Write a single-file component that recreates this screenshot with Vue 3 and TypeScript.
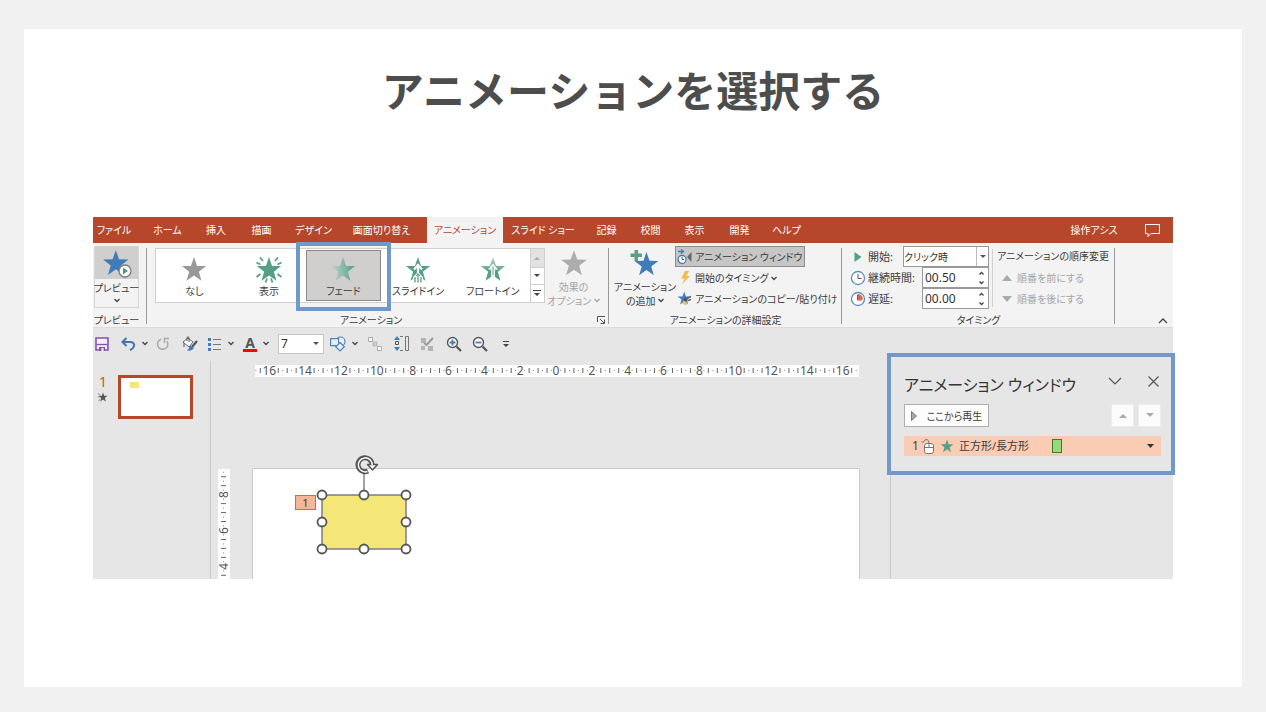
<script setup lang="ts">
import { ref } from 'vue'

interface Tab { label: string; active?: boolean }
interface Mark { at: number; kind: 'number' | 'tick' | 'dot'; value: number }

const STAR = 'M12 1 14.8 9 23 9.2 16.4 14.3 18.8 22.5 12 17.7 5.2 22.5 7.6 14.3 1 9.2 9.2 9Z'

const tabs: Tab[] = [
  { label: 'ファイル' },
  { label: 'ホーム' },
  { label: '挿入' },
  { label: '描画' },
  { label: 'デザイン' },
  { label: '画面切り替え' },
  { label: 'アニメーション', active: true },
  { label: 'スライド ショー' },
  { label: '記録' },
  { label: '校閲' },
  { label: '表示' },
  { label: '開発' },
  { label: 'ヘルプ' },
]

const effects = [
  { id: 'none', label: 'なし' },
  { id: 'appear', label: '表示' },
  { id: 'fade', label: 'フェード' },
  { id: 'slide', label: 'スライドイン' },
  { id: 'float', label: 'フロートイン' },
]
const selected = ref('fade')
const fontSize = ref('7')
const start = ref('クリック時')
const duration = ref('00.50')
const delay = ref('00.00')

const STEP = 4.48
function marks(from: number, to: number, origin: number, direction: number): Mark[] {
  const list: Mark[] = []
  for (let k = from; k <= to; k++) {
    const value = Math.abs(k / 4)
    const wide = [1, -1].some((d) => (k + d) % 8 === 0 && Math.abs((k + d) / 4) >= 10)
    if (wide) continue
    list.push({
      at: origin + direction * k * STEP,
      kind: k % 8 === 0 ? 'number' : k % 2 === 0 ? 'tick' : 'dot',
      value,
    })
  }
  return list
}
const horizontal = marks(-67, 67, 301, 1)
const vertical = marks(14, 37, 169, -1)

const handles = [
  [28, 27], [70, 27], [112, 27],
  [28, 54], [112, 54],
  [28, 81], [70, 81], [112, 81],
]
</script>

<template>
  <main class="page">
    <section class="card">
      <h1>アニメーションを選択する</h1>

      <div class="office">
        <nav class="tabs" aria-label="リボン">
          <button v-for="t in tabs" :key="t.label" type="button" :class="{ active: t.active }">{{ t.label }}</button>
          <span class="grow"></span>
          <button type="button" class="assist">操作アシス</button>
          <button type="button" aria-label="コメント">
            <svg width="17" height="15" viewBox="0 0 17 15" fill="none" stroke="#fff"><path d="M1.5 1.5h14v9H7l-3 3v-3H1.5z" /></svg>
          </button>
        </nav>

        <div class="ribbon">
          <section class="group preview">
            <div class="body">
              <button type="button" class="preview-button">
                <span class="preview-top">
                  <svg width="32" height="32" viewBox="0 0 32 32">
                    <path :d="STAR" fill="#3f7cb8" transform="translate(1 2) scale(1.15)" />
                    <circle cx="24" cy="24" r="6" fill="#fff" stroke="#7c7c7c" stroke-width="1.3" />
                    <path d="M22 20.5v7l5-3.500z" fill="#4a9c80" />
                  </svg>
                </span>
                <span>プレビュー</span>
                <svg width="6" height="5" viewBox="0 0 6 5" class="chev"><path d="M.5 1 3 3.500 5.500 1" /></svg>
              </button>
            </div>
            <footer>プレビュー</footer>
          </section>

          <section class="group animation">
            <div class="body">
              <div class="gallery">
                <button
                  v-for="e in effects"
                  :key="e.id"
                  type="button"
                  class="effect"
                  :class="{ selected: selected === e.id }"
                  @click="selected = e.id"
                >
                  <svg width="30" height="30" viewBox="0 0 30 30">
                    <defs>
                      <linearGradient id="fade"><stop offset=".1" stop-color="#b9cfc6" /><stop offset="1" stop-color="#4f9f88" /></linearGradient>
                      <linearGradient id="rise" x2="0" y2="1"><stop offset="0" stop-color="#b5d6cb" /><stop offset=".6" stop-color="#549f88" /></linearGradient>
                    </defs>
                    <path
                      :d="STAR"
                      transform="translate(1.800 2) scale(1.1)"
                      :fill="e.id === 'none' ? '#999' : e.id === 'fade' ? 'url(#fade)' : e.id === 'float' ? 'url(#rise)' : '#559f87'"
                    />
                    <path v-if="e.id === 'appear'" d="M6 3.500 9 7M24 3.500 21 7M2.500 8.500l4 2M27.500 8.500l-4 2M2.500 23l4-3M27.500 23l-4-3M11.500 28.500l1.500-4M18.500 28.500l-1.500-4" stroke="#559f87" stroke-width="1.800" />
                    <g v-if="e.id === 'slide'">
                      <path d="M15 11v11M11 15.500l4-4.500 4 4.500" fill="none" stroke="#fff" stroke-width="2.200" />
                      <path d="M10 28v-5l5-5 5 5v5z" fill="#fff" />
                      <path d="M15 20v8.500M12 23v5.500M18 23v5.500" stroke="#559f87" stroke-width="1.300" />
                      <path d="M13 22l2-2.500 2 2.500" fill="none" stroke="#559f87" />
                    </g>
                    <path v-if="e.id === 'float'" d="M15 9.500l5 6h-3v7h-4v-7h-3z" fill="#fff" />
                    <path v-if="e.id === 'float'" d="M15 12.500v9" stroke="#549f88" />
                  </svg>
                  <span>{{ e.label }}</span>
                </button>
                <div class="scroller">
                  <button type="button" class="dim" aria-label="上へ"><svg width="6" height="4" viewBox="0 0 6 4"><path d="M0 4 3 1l3 3z" fill="#aaa" /></svg></button>
                  <button type="button" aria-label="下へ"><svg width="6" height="4" viewBox="0 0 6 4"><path d="M0 0h6L3 3z" fill="#444" /></svg></button>
                  <button type="button" aria-label="その他"><svg width="8" height="7" viewBox="0 0 8 7"><path d="M0 0h8v1H0zM1 3h6L4 6z" fill="#444" /></svg></button>
                </div>
              </div>
              <button type="button" class="tall disabled" disabled>
                <svg width="28" height="28" viewBox="0 0 24 24"><path :d="STAR" fill="#adadad" /></svg>
                <span>効果の</span>
                <span>オプション <svg width="6" height="5" viewBox="0 0 6 5" class="chev"><path d="M.5 1 3 3.500 5.500 1" /></svg></span>
              </button>
            </div>
            <footer>
              <span class="grow">アニメーション</span>
              <button type="button" aria-label="詳細"><svg width="9" height="8" viewBox="0 0 9 8" fill="none" stroke="#555"><path d="M.5 6V.5H8M3 3l4 4M7.500 3.500v4h-4" /></svg></button>
            </footer>
          </section>

          <section class="group detail">
            <div class="body">
              <button type="button" class="tall">
                <svg width="32" height="28" viewBox="0 0 32 28">
                  <path :d="STAR" fill="#3f7cb8" transform="translate(4.500 2) scale(1.080)" />
                  <path d="M5.500 1h3.500v3.500h4V8H9v4H5.500V8h-4V4.500h4z" fill="#5b9f8a" />
                </svg>
                <span>アニメーション</span>
                <span>の追加 <svg width="6" height="5" viewBox="0 0 6 5" class="chev"><path d="M.5 1 3 3.500 5.500 1" /></svg></span>
              </button>
              <div class="rows">
                <button type="button" class="pressed">
                  <svg width="16" height="16" viewBox="0 0 16 16">
                    <path d="M1 2.500h5M4 .5l2.500 2L4 4.500" fill="none" stroke="#3f7cb8" stroke-width="1.300" />
                    <circle cx="5" cy="10.500" r="4" fill="#fff" stroke="#3f7cb8" stroke-width="1.300" />
                    <path d="M5 8v2.500h2" fill="none" stroke="#555" />
                    <path d="M14.500 3v10L10 8z" fill="#666" />
                  </svg>
                  <span>アニメーション ウィンドウ</span>
                </button>
                <button type="button">
                  <svg width="16" height="16" viewBox="0 0 16 16"><path d="M8 1h4L9.500 6H13L5 14.500 7.500 8.500H4z" fill="#f0bd55" /></svg>
                  <span>開始のタイミング <svg width="6" height="5" viewBox="0 0 6 5" class="chev"><path d="M.5 1 3 3.500 5.500 1" /></svg></span>
                </button>
                <button type="button">
                  <svg width="16" height="16" viewBox="0 0 16 16">
                    <path :d="STAR" fill="#3f7cb8" transform="translate(0 0) scale(.6)" />
                    <path d="M6 8.500l3-2 2 2.500-2.500 2z" fill="#555" /><path d="M6.500 9.500l4.500 2.500-2.500 2.500-3-2z" fill="#f0c070" /><path d="M10 7.500l4-2M11 9.500l3-1" stroke="#666" stroke-width="1.500" />
                  </svg>
                  <span>アニメーションのコピー/貼り付け</span>
                </button>
              </div>
            </div>
            <footer>アニメーションの詳細設定</footer>
          </section>

          <section class="group timing">
            <div class="body">
              <div class="fields">
                <div class="field">
                  <svg width="16" height="16" viewBox="0 0 16 16"><path d="M4.500 3v10l7-5z" fill="#559f87" /></svg>
                  <label for="start">開始:</label>
                  <span class="combo start">
                    <select id="start" v-model="start"><option>クリック時</option><option>直前の動作と同時</option></select>
                    <i><svg width="6" height="4" viewBox="0 0 6 4"><path d="M0 0h6L3 3z" fill="#555" /></svg></i>
                  </span>
                </div>
                <div class="field">
                  <svg width="16" height="16" viewBox="0 0 16 16"><circle cx="8" cy="8" r="6.500" fill="#fff" stroke="#5e8fc0" stroke-width="1.300" /><path d="M8 4v4.500h3.500" fill="none" stroke="#555" /></svg>
                  <label for="duration">継続時間:</label>
                  <span class="combo spin">
                    <input id="duration" v-model="duration" type="text" />
                    <i><svg width="7" height="14" viewBox="0 0 7 14" class="chev"><path d="M1.500 3.500l2-2 2 2M1.500 10.500l2 2 2-2" /></svg></i>
                  </span>
                </div>
                <div class="field">
                  <svg width="16" height="16" viewBox="0 0 16 16"><circle cx="8" cy="8" r="6.500" fill="#fff" stroke="#5e8fc0" stroke-width="1.300" /><path d="M8 8.500V3a5.500 5.500 0 0 1 5 5.500z" fill="#e5604a" /><path d="M7.500 3.500V9H12" fill="none" stroke="#a44" /></svg>
                  <label for="delay">遅延:</label>
                  <span class="combo spin">
                    <input id="delay" v-model="delay" type="text" />
                    <i><svg width="7" height="14" viewBox="0 0 7 14" class="chev"><path d="M1.500 3.500l2-2 2 2M1.500 10.500l2 2 2-2" /></svg></i>
                  </span>
                </div>
              </div>
              <div class="order">
                <span>アニメーションの順序変更</span>
                <button type="button" disabled><svg width="10" height="6" viewBox="0 0 10 6"><path d="M0 6 5 0l5 6z" fill="#aaa" /></svg>順番を前にする</button>
                <button type="button" disabled><svg width="10" height="6" viewBox="0 0 10 6"><path d="M0 0h10L5 6z" fill="#aaa" /></svg>順番を後にする</button>
              </div>
            </div>
            <footer>タイミング</footer>
          </section>

          <button type="button" class="collapse" aria-label="リボンを折りたたむ">
            <svg width="10" height="6" viewBox="0 0 10 6" fill="none" stroke="#444" stroke-width="1.300"><path d="M1 5l4-4 4 4" /></svg>
          </button>
          <div class="frame frame-fade"></div>
        </div>

        <div class="quick">
          <button type="button" class="w26" aria-label="保存"><svg width="14" height="14" viewBox="0 0 14 14"><path d="M1 1h12v12H1z" fill="#f3eef7" stroke="#8454a8" stroke-width="1.600" /><path d="M1.500 7.500h11" stroke="#8454a8" stroke-width="1.300" /><path d="M4 10h6v4H4z" fill="#8454a8" /><path d="M6.500 11h2v3h-2z" fill="#fff" /></svg></button>
          <button type="button" class="w36" aria-label="元に戻す">
            <svg width="15" height="14" viewBox="0 0 15 14" fill="none" stroke="#3f76b5" stroke-width="2"><path d="M5.500 1 1.500 5l4 4M2 5h7c6 0 5 6 0 8" /></svg>
            <svg width="6" height="5" viewBox="0 0 6 5" class="chev"><path d="M.5 1 3 3.500 5.500 1" /></svg>
          </button>
          <button type="button" class="w26" aria-label="繰り返し"><svg width="14" height="14" viewBox="0 0 14 14" fill="none" stroke="#aaa" stroke-width="1.500"><path d="M5 2.200a5.200 5.200 0 1 0 6 2M8.500 6V1.500H13" /></svg></button>
          <button type="button" class="w26" aria-label="塗りつぶし"><svg width="16" height="16" viewBox="0 0 16 16"><path d="M1 6l5-4 5 4-4 5z" fill="#fff" stroke="#666" /><path d="M5 5V1.500q1-1.500 2 0V6M2 7v4" stroke="#555" fill="none" /><path d="M15 5 10 11" stroke="#555" stroke-width="2.200" /><path d="M8 9l4 3q-2 3.500-7 2.500 2-1 3-5.500z" fill="#3f7cb8" /></svg></button>
          <button type="button" class="w36" aria-label="箇条書き">
            <svg width="14" height="14" viewBox="0 0 14 14"><path d="M0 1h3v3H0zM0 6h3v3H0zM0 11h3v3H0z" fill="#3f7cb8" /><path d="M5 2.500h8M5 7.500h8M5 12.500h8" stroke="#777" /></svg>
            <svg width="6" height="5" viewBox="0 0 6 5" class="chev"><path d="M.5 1 3 3.500 5.500 1" /></svg>
          </button>
          <button type="button" class="w36" aria-label="フォントの色">
            <span class="font-color">A</span>
            <svg width="6" height="5" viewBox="0 0 6 5" class="chev"><path d="M.5 1 3 3.500 5.500 1" /></svg>
          </button>
          <span class="combo size">
            <select v-model="fontSize" aria-label="フォント サイズ"><option>7</option><option>8</option></select>
            <i><svg width="6" height="4" viewBox="0 0 6 4"><path d="M0 0h6L3 3z" fill="#555" /></svg></i>
          </span>
          <button type="button" class="w38" aria-label="図形">
            <svg width="16" height="16" viewBox="0 0 16 16" stroke="#4f83b9" stroke-width="1.200" fill="#e6eff7"><circle cx="10.500" cy="5.500" r="4.500" /><path d="M.6 2.600h8v7h-8z" /><path d="M10 6.500l4.300 4.300L10 15l-4.300-4.200z" /></svg>
            <svg width="6" height="5" viewBox="0 0 6 5" class="chev"><path d="M.5 1 3 3.500 5.500 1" /></svg>
          </button>
          <button type="button" class="w26" aria-label="グループ化"><svg width="14" height="14" viewBox="0 0 14 14" fill="#fff" stroke="#aaa"><path d="M.5.5h4v4h-4zM9.500 9.500h4v4h-4z" /><path d="M5 5h4v4H5z" fill="#ccc" stroke="#bbb" /></svg></button>
          <button type="button" class="w26" aria-label="高さ"><svg width="16" height="15" viewBox="0 0 16 15" fill="none" stroke="#777"><path d="M11.500.5h3v14h-3zM6 .5h3M6 14.500h3" /><path d="M1.500 5.500h3v3h-3z" stroke="#555" /><path d="M3 0l3 4H0zM3 15l3-4H0z" fill="#3f7cb8" stroke="none" /></svg></button>
          <button type="button" class="w26" aria-label="書式"><svg width="14" height="14" viewBox="0 0 14 14"><path d="M1 1h5v5H1zM8 9h5v5H8zM1 9h4v4H1z" fill="#b4b4b4" /><path d="M13 1 6.500 8 4 6" stroke="#999" stroke-width="2" fill="none" /></svg></button>
          <button type="button" class="w26" aria-label="拡大"><svg width="16" height="16" viewBox="0 0 16 16" fill="none" stroke="#555"><circle cx="6.500" cy="6.500" r="5" fill="#fff" stroke-width="1.400" /><path d="M10.500 10.500 15 15" stroke-width="2.200" /><path d="M3.500 6.500h6M6.500 3.500v6" stroke="#3f7cb8" stroke-width="1.800" /></svg></button>
          <button type="button" class="w32" aria-label="縮小"><svg width="16" height="16" viewBox="0 0 16 16" fill="none" stroke="#555"><circle cx="6.500" cy="6.500" r="5" fill="#fff" stroke-width="1.400" /><path d="M10.500 10.500 15 15" stroke-width="2.200" /><path d="M3.500 6.500h6" stroke="#3f7cb8" stroke-width="1.800" /></svg></button>
          <button type="button" aria-label="カスタマイズ"><svg width="6" height="6" viewBox="0 0 6 6"><path d="M0 0h6v1H0zM0 3h6L3 6z" fill="#444" /></svg></button>
        </div>

        <div class="workspace">
          <aside class="slides">
            <div class="slide-meta">
              <b>1</b>
              <svg width="10" height="10" viewBox="0 0 24 24"><path :d="STAR" fill="#555" /><path d="M0 4l5 2M0 12h4M1 21l4-3" stroke="#777" stroke-width="2" /></svg>
            </div>
            <button type="button" class="thumb" aria-label="スライド 1"><i></i></button>
          </aside>

          <div class="editor">
            <svg class="ruler-h" width="604" height="12" viewBox="0 0 604 12">
              <template v-for="m in horizontal" :key="m.at">
                <text v-if="m.kind === 'number'" :x="m.at" y="10" text-anchor="middle">{{ m.value }}</text>
                <rect v-else-if="m.kind === 'tick'" :x="m.at - 0.5" y="3" width="1" height="5" fill="#666" />
                <rect v-else :x="m.at - 0.5" y="5" width="1" height="1" fill="#888" />
              </template>
            </svg>
            <svg class="ruler-v" width="12" height="110" viewBox="0 0 12 110">
              <template v-for="m in vertical" :key="m.at">
                <text v-if="m.kind === 'number'" :transform="`translate(10 ${m.at}) rotate(-90)`" text-anchor="middle">{{ m.value }}</text>
                <rect v-else-if="m.kind === 'tick'" x="3" :y="m.at - 0.5" width="5" height="1" fill="#666" />
                <rect v-else x="5" :y="m.at - 0.5" width="1" height="1" fill="#888" />
              </template>
            </svg>
            <div class="slide">
              <span class="tag">1</span>
              <svg class="shape" width="120" height="104" viewBox="0 0 120 104">
                <g transform="translate(0 14)">
                  <path d="M70 27V6" stroke="#666" stroke-width="1.200" />
                  <rect x="28" y="27" width="84" height="54" fill="#f4e677" stroke="#7c7c8c" stroke-width="1.500" />
                  <g fill="#fff" stroke="#555" stroke-width="1.800">
                    <circle v-for="(h, i) in handles" :key="i" :cx="h[0]" :cy="h[1]" r="4.500" />
                  </g>
                  <g fill="none" stroke-linejoin="round">
                    <path d="M78-3A7 7 0 1 0 74 3" stroke="#555" stroke-width="5" />
                    <path d="M73.500-3.500h10l-5 5.500z" fill="#fff" stroke="#555" stroke-width="1.500" />
                    <path d="M78.300-3A7 7 0 1 0 73.500 3.500" stroke="#fff" stroke-width="1.500" />
                  </g>
                </g>
              </svg>
            </div>
          </div>

          <aside class="pane">
            <header>
              <h2>アニメーション ウィンドウ</h2>
              <button type="button" aria-label="オプション"><svg width="14" height="8" viewBox="0 0 14 8" fill="none" stroke="#555" stroke-width="1.200"><path d="M1 1l6 6 6-6" /></svg></button>
              <button type="button" aria-label="閉じる"><svg width="11" height="11" viewBox="0 0 11 11" fill="none" stroke="#555" stroke-width="1.200"><path d="M.5.5l10 10M10.500.5l-10 10" /></svg></button>
            </header>
            <div class="controls">
              <button type="button" class="play"><svg width="6" height="10" viewBox="0 0 6 10"><path d="M.5.5v9l5-4.500z" fill="#aaa" stroke="#777" /></svg>ここから再生</button>
              <button type="button" class="step" disabled aria-label="前へ"><svg width="8" height="5" viewBox="0 0 8 5"><path d="M0 5l4-4 4 4z" fill="#aaa" /></svg></button>
              <button type="button" class="step" disabled aria-label="後へ"><svg width="8" height="5" viewBox="0 0 8 5"><path d="M0 0h8L4 4z" fill="#aaa" /></svg></button>
            </div>
            <button type="button" class="item">
              <span class="order-number">1</span>
              <svg width="14" height="16" viewBox="0 0 14 16" fill="none" stroke="#777"><path d="M.5 3.500Q2 5 3 3.500 4 1 6 1.500q2 .5 2 4" /><rect x="3.500" y="5.500" width="9" height="10" rx="2.500" fill="#fff" /><path d="M3.500 9.500h9M8 5.500v4" /></svg>
              <svg width="14" height="14" viewBox="0 0 24 24"><path :d="STAR" fill="#559f87" /></svg>
              <span class="name">正方形/長方形</span>
              <i></i>
              <svg width="7" height="4" viewBox="0 0 7 4" class="end"><path d="M0 0h7L3.500 4z" fill="#333" /></svg>
            </button>
          </aside>
          <div class="frame frame-pane"></div>
        </div>
      </div>
    </section>
  </main>
</template>

<style>
body { margin: 0; }
</style>

<style scoped>
.page {
  box-sizing: border-box;
  min-height: 100vh;
  padding: 29px 24px 25px;
  display: flex;
  background: #f1f1f1;
  color: #3c3c3c;
  font-family: "Noto Sans", "Noto Sans CJK JP", sans-serif;
  font-size: 11px;
  line-height: 14px;
  font-feature-settings: "palt";
}
.page * { box-sizing: border-box; }
.card { flex: 1; min-width: 0; background: #fff; padding: 29px 69px; }
h1 {
  margin: 0 0 97px;
  text-align: center;
  color: #4d4d4d;
  font: 700 42px/62px "Noto Sans CJK JP", sans-serif;
  font-feature-settings: normal;
}
button, select, input {
  font: inherit;
  font-feature-settings: inherit;
  color: inherit;
  margin: 0;
  padding: 0;
  border: 0;
  background: none;
  border-radius: 0;
  outline: 0;
}
button { display: flex; align-items: center; justify-content: center; white-space: nowrap; }
svg { flex: none; display: block; }
.chev { display: inline-block; fill: none; stroke: #444; stroke-width: 1.3; vertical-align: middle; }
.grow { flex: 1; }
.office { background: #e6e6e6; position: relative; }

.tabs {
  display: grid;
  grid-template-columns: 42px 65px 32px 59px 45px 91px 76px 80px 47px 41px 47px 43px 51px 1fr 52px 53px;
  height: 26px;
  background: #b7472a;
  color: #fff;
  font-size: 10px;
}
.tabs button.active { background: #f3f3f3; color: #b7472a; }
.tabs button:last-child { padding-right: 14px; justify-content: flex-end; }
.tabs button:last-child svg { margin-right: -2px; }

.ribbon { display: flex; height: 85px; background: #f3f3f3; border-bottom: 1px solid #dcdcdc; position: relative; padding: 3px 0 0; font-size: 10px; }
.group { display: flex; flex-direction: column; position: relative; }
.group::after { content: ""; position: absolute; right: 0; top: 2px; bottom: 3px; width: 1px; background: #999; }
.body { flex: 1; display: flex; align-items: flex-start; }
footer { height: 14px; display: flex; justify-content: center; text-align: center; }
.preview { width: 54px; }
.preview footer { padding-right: 7px; }
.preview-button { flex-direction: column; width: 45px; height: 62px; margin-left: 1px; border: 1px solid #d5d5d5; justify-content: flex-start; }
.preview-top { width: 100%; height: 32px; margin-bottom: 2px; background: #cfcfcf; display: flex; justify-content: center; }
.preview-button .chev { margin-top: 3px; }
.animation { width: 462px; }
.animation footer { padding-right: 2px; }
.gallery { display: flex; width: 390px; height: 55px; margin: 2px 0 0 8px; border: 1px solid #cfcfcf; background: #fff; }
.effect { flex: 1; flex-direction: column; justify-content: flex-start; border: 1px solid transparent; height: 51px; margin-top: 1px; }
.effect:first-child { margin-left: 1px; }
.effect svg { margin-top: 3px; }
.effect.selected { background: #d0cfcd; border-color: #8a8a8a; }
.scroller { width: 14px; display: grid; grid-template-rows: 18px 17px 18px; border-left: 1px solid #cfcfcf; }
.scroller button + button { border-top: 1px solid #cfcfcf; }
.scroller .dim { background: #e2e2e2; }
.tall { flex-direction: column; width: 57px; height: 62px; padding-top: 3px; justify-content: flex-start; }
.tall svg:first-child { margin-bottom: 3px; }
.disabled, .order button { color: #a6a6a6; }
.disabled .chev { stroke: #a6a6a6; }
.animation footer button { width: 12px; }
.detail { width: 233px; }
.detail .tall { width: 60px; margin-left: 6px; }
.rows { display: grid; grid-template-rows: 21px 21px 21px; justify-items: start; }
.rows button { padding-left: 2px; gap: 2px; height: 21px; }
.rows .pressed { background: #c6c6c6; border: 1px solid #8c8c8c; padding: 0 2px 0 1px; }
.timing { width: 273px; }
.fields { width: 147px; padding-left: 8px; display: grid; grid-template-rows: 21px 21px 21px; }
.field { display: flex; align-items: center; gap: 2px; font-size: 11px; }
.combo { display: flex; margin-left: auto; height: 21px; background: #fff; border: 1px solid #999; font-size: 11px; }
.combo select, .combo input { flex: 1; min-width: 0; width: 0; padding-left: 2px; appearance: none; color: #333; }
.combo i { width: 14px; display: flex; align-items: center; justify-content: center; }
.combo.start { width: 86px; font-size: 10px; }
.combo.start select { padding-left: 0; }
.combo.start i { border-left: 1px solid #bbb; width: 12px; }
.combo.spin { width: 67px; font-size: 12px; }
.order { margin: 3px 0 0 3px; padding-left: 4px; border-left: 1px solid #d0d0d0; display: grid; grid-template-rows: 16px 21px 21px; }
.order button { justify-content: flex-start; gap: 5px; padding: 4px 0 0 5px; }
.collapse { margin: auto 5px 0 auto; height: 12px; }
.frame { position: absolute; border: 4px solid #7098ca; pointer-events: none; }
.frame-fade { left: 203px; top: -1px; width: 95px; height: 69px; }

.quick { display: flex; align-items: center; height: 33px; padding: 0 0 2px 2px; }
.quick button { justify-content: flex-start; gap: 6px; height: 20px; }
.quick .w26 { width: 26px; }
.quick .w32 { width: 31px; }
.quick .w36 { width: 35px; }
.quick .w38 { width: 38px; }
.font-color { width: 14px; height: 16px; border-bottom: 3px solid red; font: 700 14px/14px "Noto Sans", sans-serif; color: #555; text-align: center; }
.combo.size { width: 46px; height: 20px; margin: 0 6px 0 0; border-color: #c6c6c6; font-size: 12px; }

.workspace { display: flex; height: 218px; position: relative; }
.slides { width: 118px; border-right: 1px solid #c9c9c9; display: flex; gap: 10px; padding: 14px 0 0 5px; align-items: flex-start; }
.slide-meta { width: 10px; display: flex; flex-direction: column; align-items: center; gap: 3px; }
.slide-meta b { font-weight: 400; font-size: 14px; color: #d0512f; }
.thumb { width: 75px; height: 44px; border: 3px solid #b7472a; background: #fff; align-items: flex-start; justify-content: flex-start; }
.thumb i { width: 9px; height: 6px; margin: 4px 0 0 9px; background: #f4e677; }
.editor { flex: 1; min-width: 0; display: grid; grid-template-columns: 34px 1fr; grid-template-rows: 106px 1fr; padding: 1px 30px 0 7px; }
.editor svg { background: #fff; overflow: visible; }
.editor text { font: 12px "Noto Sans", sans-serif; fill: #555; }
.ruler-h { grid-column: 2; margin: 3px 0 0 3px; }
.ruler-v { grid-column: 1; margin-top: 1px; }
.slide { grid-column: 2; position: relative; background: #fff; border: 1px solid #cacaca; border-bottom: 0; }
.tag { position: absolute; left: 42px; top: 26px; width: 21px; height: 15px; background: #f6b698; border: 1px solid #e5603c; text-align: center; line-height: 13px; }
.editor .shape { position: absolute; left: 41px; top: -15px; background: none; }
.pane { width: 283px; border-left: 1px solid #c9c9c9; padding: 10px 12px 0 13px; }
.pane header { display: flex; align-items: center; height: 28px; }
h2 { margin: 0 auto 0 0; font-size: 16px; font-weight: 400; line-height: 26px; color: #333; white-space: nowrap; }
.pane header button { width: 26px; height: 20px; align-self: flex-start; }
.pane header button:last-child { margin: 0 -5px 0 12px; }
.controls { display: flex; gap: 4px; margin-top: 5px; }
.play { width: 85px; height: 23px; background: #fdfdfd; border: 1px solid #adadad; gap: 10px; margin-right: auto; font-size: 10px; }
.step { width: 23px; height: 23px; background: #fcfcfc; border: 1px solid #ececec; }
.item { width: 100%; height: 20px; margin-top: 9px; background: #fbccb4; padding: 0 7px 0 8px; justify-content: flex-start; gap: 5px; }
.order-number { width: 7px; margin-right: -3px; font-size: 12px; }
.name { width: 88px; text-align: left; }
.item i { width: 10px; height: 14px; background: #98d97d; border: 1px solid #3f7a2c; }
.end { margin-left: auto; }
.frame-pane { right: -2px; top: -8px; width: 288px; height: 122px; }
</style>
